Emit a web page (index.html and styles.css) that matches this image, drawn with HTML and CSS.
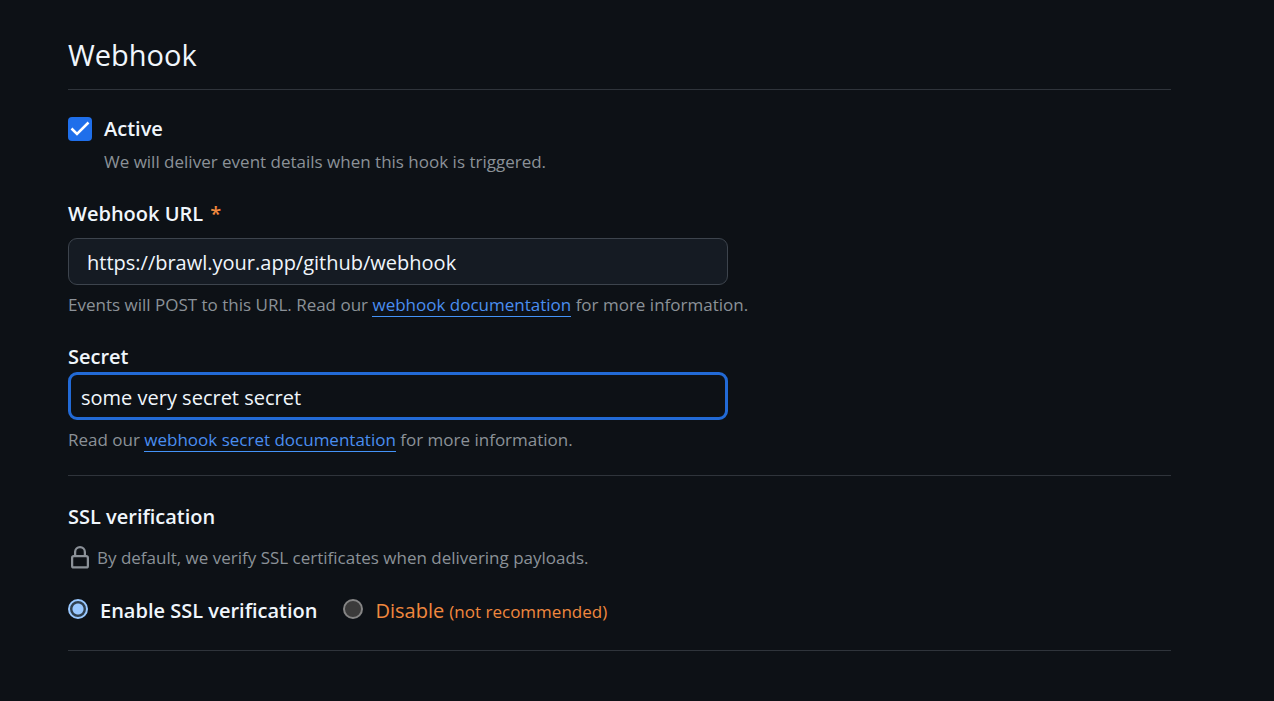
FILE: index.html
```html
<!DOCTYPE html>
<html lang="en">
<head>
<meta charset="utf-8">
<meta name="viewport" content="width=device-width, initial-scale=1">
<title>Webhook</title>
<link rel="stylesheet" href="styles.css">
</head>
<body>
<main class="page">
  <h2 class="title">Webhook</h2>
  <form class="form">
    <section class="section">
      <div class="active">
        <input class="checkbox" type="checkbox" id="active" checked aria-describedby="active-help">
        <div>
          <label class="label" for="active">Active</label>
          <p class="help help-active" id="active-help">We will deliver event details when this hook is triggered.</p>
        </div>
      </div>
      <div class="field field-url">
        <label class="label" for="url">Webhook URL <span class="required">*</span></label>
        <input class="input input-url" type="text" id="url" value="https://brawl.your.app/github/webhook">
        <p class="help">Events will POST to this URL. Read our <a class="link" href="#webhooks">webhook documentation</a> for more information.</p>
      </div>
      <div class="field">
        <label class="label" for="secret">Secret</label>
        <input class="input input-secret" type="text" id="secret" value="some very secret secret">
        <p class="help">Read our <a class="link" href="#secrets">webhook secret documentation</a> for more information.</p>
      </div>
    </section>
    <section class="section section-ssl">
      <h3 class="label">SSL verification</h3>
      <p class="help ssl-help">
        <svg class="lock" viewBox="0 0 16 16" aria-hidden="true"><path d="M4 4a4 4 0 0 1 8 0v2h.25c.966 0 1.75.784 1.75 1.75v5.5A1.75 1.75 0 0 1 12.25 15h-8.5A1.75 1.75 0 0 1 2 13.25v-5.5C2 6.784 2.784 6 3.75 6H4Zm8.25 3.5h-8.5a.25.25 0 0 0-.25.25v5.5c0 .138.112.25.25.25h8.5a.25.25 0 0 0 .25-.25v-5.5a.25.25 0 0 0-.25-.25ZM10.5 6V4a2.5 2.5 0 1 0-5 0v2Z"/></svg>
        <span>By default, we verify SSL certificates when delivering payloads.</span>
      </p>
      <div class="options">
        <div class="option">
          <input class="radio" type="radio" name="ssl" id="ssl-on" checked>
          <label class="label" for="ssl-on">Enable SSL verification</label>
        </div>
        <div class="option">
          <input class="radio" type="radio" name="ssl" id="ssl-off">
          <label class="disable" for="ssl-off">Disable <small class="note">(not recommended)</small></label>
        </div>
      </div>
    </section>
  </form>
</main>
</body>
</html>
```
FILE: styles.css
```css
* { box-sizing: border-box; }
body {
  margin: 0;
  background: #0d1116;
  color: #f0f6fc;
  font: 20px/30px "Segoe UI", "Open Sans", "Noto Sans", sans-serif;
}
.page { padding: 35px 103px 40px 68px; }
.title {
  margin: 0;
  padding-bottom: 14px;
  border-bottom: 1px solid #2f343b;
  font-size: 29px;
  font-weight: 400;
  line-height: 40px;
}
.section {
  padding: 24px 0 23px;
  border-bottom: 1px solid #2f343b;
}
.section-ssl { padding-top: 26px; }
.active { display: flex; gap: 12px; }
.label {
  display: block;
  margin: 0;
  font-size: 20px;
  font-weight: 600;
}
.help {
  margin: 8px 0 0;
  color: #8b9198;
  font-size: 17px;
  line-height: 24px;
}
.help-active { margin-top: 6px; }
.field { margin-top: 25px; }
.required { margin-left: 2px; color: #f0883e; }
.checkbox {
  flex: none;
  appearance: none;
  width: 24px;
  height: 24px;
  margin: 3px 0 0;
  border-radius: 4px;
  background: #1f6feb url("data:image/svg+xml,%3Csvg xmlns='http://www.w3.org/2000/svg' viewBox='0 0 24 24'%3E%3Cpath d='M3.500 11.500L9 17L20.500 5.500' fill='none' stroke='white' stroke-width='2.500'/%3E%3C/svg%3E");
}
.input {
  display: block;
  width: 100%;
  max-width: 660px;
  height: 47px;
  border-radius: 9px;
  color: #f0f6fc;
  font: inherit;
  outline: none;
}
.input-url {
  margin-top: 9px;
  padding: 2px 18px 0;
  border: 1px solid #3d444d;
  background: #151b23;
}
.input-secret {
  height: 48px;
  padding: 2px 10px 0;
  border: 3px solid #226ad6;
  background: #0d1116;
}
.link {
  border-bottom: 1px solid #4493f8;
  color: #4a8ef0;
  text-decoration: none;
}
.ssl-help { display: flex; align-items: center; gap: 5px; margin-top: 14px; }
.lock { width: 24px; height: 24px; fill: #8b9198; }
.options { display: flex; flex-wrap: wrap; gap: 26px; margin-top: 26px; }
.option { display: flex; gap: 12px; }
.radio {
  appearance: none;
  width: 20px;
  height: 20px;
  margin: 3px 0 0;
  border: 2px solid #858585;
  border-radius: 50%;
  background: #3b3b3b;
}
.radio:checked {
  border-color: #99c8ff;
  background: radial-gradient(circle, #99c8ff 5px, #2f4050 6px);
}
.disable { color: #f0883e; }
.note { font-size: 17px; }
```
